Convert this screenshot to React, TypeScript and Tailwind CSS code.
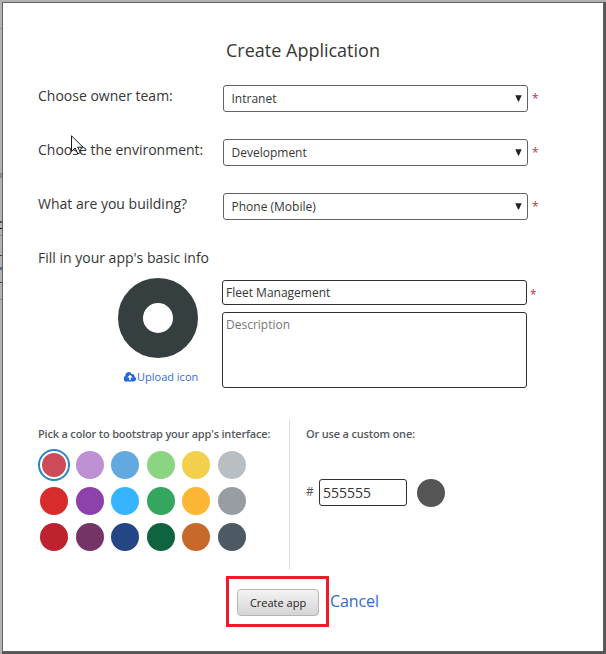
import React from "react";

const swatches = [
  ["#cd4b59", "#bd90d3", "#62a9df", "#8bd582", "#f2d04b", "#b8bec2"],
  ["#d82c2c", "#8c41ab", "#37b4ff", "#34a65e", "#fdb633", "#979da3"],
  ["#bd232f", "#733566", "#244684", "#0f6341", "#c6692b", "#4d5a63"],
];

function SelectRow({ label, value }: { label: string; value: string }) {
  return (
    <div className="flex h-[54px] items-start">
      <div className="w-[185px] text-[14px] leading-[22px]">{label}</div>
      <div className="flex h-[27px] w-[305px] items-center justify-between rounded-[3px] border border-[#626366] pl-[7.5px] pr-[5px] text-[12px]">
        <span>{value}</span>
        <svg width="7" height="7" viewBox="0 0 7 7" className="mb-px">
          <path d="M0.3 0.3H6.7L3.9 6.5H3.1Z" fill="#222" />
        </svg>
      </div>
      <Star className="ml-[4px] mt-[5px]" />
    </div>
  );
}

function Star({ className }: { className: string }) {
  return <span className={`${className} text-[12px] leading-[18px] text-[#b73447]`}>*</span>;
}

function UploadIcon() {
  return (
    <svg width="12" height="10" viewBox="0 0 12 10">
      <path
        d="M3 9.5A2.8 2.8 0 0 1 1.5 4.1A3.3 3.3 0 0 1 7.8 2.2A2.1 2.1 0 0 1 10.5 4.7A2.5 2.5 0 0 1 9.5 9.5Z"
        fill="#2468dc"
      />
      <path d="M6 2.8L8.7 5.6H6.8V7.9H5.2V5.6H3.3Z" fill="white" />
    </svg>
  );
}

export default function App() {
  return (
    <div className="relative flex h-[654px] w-[606px] overflow-hidden whitespace-nowrap bg-[#b2b2b2] font-['Open_Sans',sans-serif] text-[#363636]">
      <div className="flex h-full w-[2px] shrink-0 flex-col overflow-hidden">
        <div className="mt-7 h-px bg-[#999]" />
        <div className="mt-[144px] h-[5px] bg-[#8c8892]" />
        <div className="mt-[43px] h-[2px] bg-[#555]" />
        <div className="mt-[5px] h-px bg-[#111]" />
        <div className="mt-[6px] h-px bg-[#888]" />
        <div className="mt-[19px] h-px bg-[#444]" />
        <div className="mt-[11px] h-[3px] bg-[#58708a]" />
        <div className="mt-[12px] h-px bg-[#444]" />
        <div className="mt-[16px] h-px bg-[#888]" />
      </div>
      <div className="mt-[2px] flex h-[652px] w-[604px] shrink-0 flex-col bg-[#565656]">
        <div className="flex h-[650px] w-[602px] flex-col border border-[#626262] bg-white">
          <div className="mt-[34px] pl-[223px] text-[18px] leading-[26px]">Create Application</div>
          <div className="mt-[22px] h-[162px] pl-[35px]">
            <SelectRow label="Choose owner team:" value="Intranet" />
            <SelectRow label="Choose the environment:" value="Development" />
            <SelectRow label="What are you building?" value="Phone (Mobile)" />
          </div>
          <div className="h-[31px] pl-[35px] text-[14px] leading-[22px]">Fill in your app&apos;s basic info</div>
          <div className="flex h-[138px] pl-[115px]">
            <div className="flex w-[104px] flex-col">
              <div className="h-20 w-20 rounded-full border-[25px] border-[#353f40]" />
              <div className="ml-[6px] mt-[11px] flex items-center gap-px text-[11px] leading-4 text-[#326be0]">
                <UploadIcon />
                <span>Upload icon</span>
              </div>
            </div>
            <div className="mt-[2px] flex flex-col gap-[7px] text-[12px]">
              <div className="h-[25px] w-[305px] rounded-[3px] border border-[#2e2f32] pl-[3px] leading-[23px]">Fleet Management</div>
              <div className="h-[76px] w-[305px] rounded-[3px] border border-[#2e2f32] pl-[3px] pt-[3px] leading-[17px] text-[#777]">Description</div>
            </div>
            <Star className="ml-[3px] mt-[8px]" />
          </div>
          <div className="mt-[3px] flex h-[150px]">
            <div className="w-[287px] border-r border-[#dedede] pl-[35px] pt-[6px]">
              <div className="text-[11px] font-semibold leading-[18px] tracking-[-0.19px] text-[#55595d]">Pick a color to bootstrap your app&apos;s interface:</div>
              <div className="mt-[6px] flex flex-col gap-1">
                {swatches.map((row, r) => (
                  <div key={r} className="flex gap-[3.55px]">
                    {row.map((color, c) =>
                      r === 0 && c === 0 ? (
                        <div key={c} className="flex h-8 w-8 items-center justify-center rounded-full border-2 border-[#2785c8]">
                          <div className="h-6 w-6 rounded-full" style={{ backgroundColor: color }} />
                        </div>
                      ) : (
                        <div key={c} className="flex h-8 w-8 items-center justify-center">
                          <div className="h-7 w-7 rounded-full" style={{ backgroundColor: color }} />
                        </div>
                      ),
                    )}
                  </div>
                ))}
              </div>
            </div>
            <div className="pl-4 pt-[6px]">
              <div className="text-[11px] font-semibold leading-[18px] tracking-[-0.17px] text-[#55595d]">Or use a custom one:</div>
              <div className="mt-[36px] flex h-7 items-start">
                <span className="w-[13px] text-[12px] leading-[26px] text-[#555]">#</span>
                <div className="h-[27px] w-[88px] rounded-[3px] border border-[#2e2f32] pl-[3px] text-[14px] leading-[26px]">555555</div>
                <div className="ml-[10px] h-7 w-7 rounded-full bg-[#555555]" />
              </div>
            </div>
          </div>
          <div className="mt-[7px] flex pl-[223px]">
            <div className="flex h-[51px] w-[103px] items-center justify-center border-[3px] border-[#ee1c25] pt-[2px]">
              <div className="h-[27px] w-[82px] rounded-[4px] border border-[#b5b5b5] bg-gradient-to-b from-[#f3f3f3] to-[#d5d5d5] pl-px text-center text-[11px] leading-[26px] text-[#222]">Create app</div>
            </div>
            <div className="ml-px mt-[13px] text-[16px] leading-[24px] tracking-[-0.1px] text-[#3269dc]">Cancel</div>
          </div>
        </div>
      </div>
      <svg className="absolute left-[71px] top-[135px]" width="13" height="20" viewBox="0 0 13 20">
        <path d="M0.5 0.8V16.5L4.2 13L6.8 18.8L9.3 17.6L6.8 12.2H12Z" fill="white" stroke="#171b2c" strokeWidth="1" />
      </svg>
    </div>
  );
}
